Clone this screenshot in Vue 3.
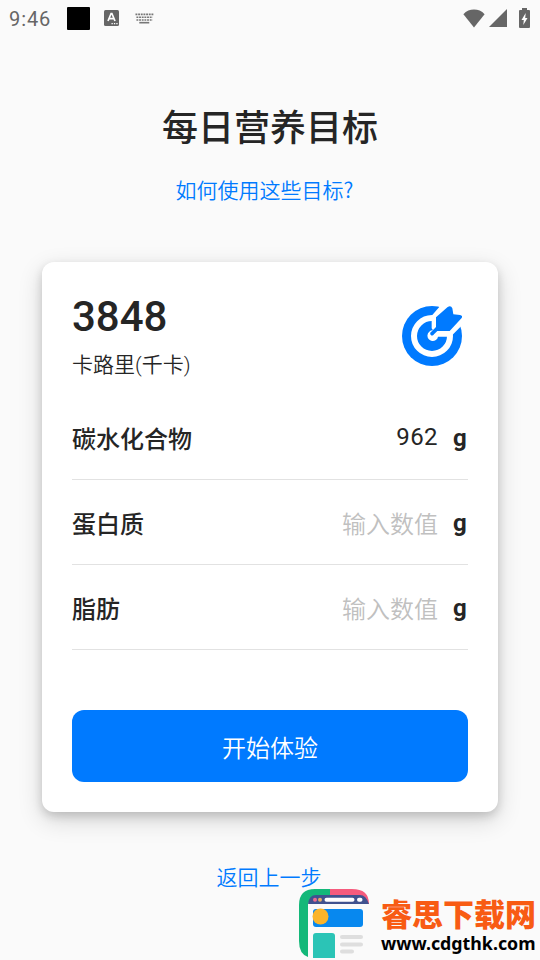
<script setup>
import { ref } from 'vue'

const nutrients = ref([
  { name: '碳水化合物', value: '962' },
  { name: '蛋白质', value: '' },
  { name: '脂肪', value: '' },
])
</script>

<template>
  <div class="screen">
    <header class="status">
      <span class="clock">9:46</span>
      <span class="block"></span>
      <svg class="ime" viewBox="0 0 15 16">
        <rect width="15" height="16" rx="1.5" fill="#666" />
        <path d="M4 11 7.1 3.5h.8L11 11M5.2 8.6h4.6" fill="none" stroke="#fff" stroke-width="1.7" />
        <path d="M7.5 13.7h1.3M9.9 13.7h1.3M12.3 13.7h1.3" stroke="#fff" stroke-width="1.2" />
      </svg>
      <svg class="keys" viewBox="0 0 20 11">
        <g fill="none" stroke="#777" stroke-width="1.7">
          <path d="M.5 1.2h19" stroke-dasharray="2 .8" />
          <path d="M1.5 4.2h17" stroke-dasharray="2 .8" />
          <path d="M1.5 7.1h17" stroke-dasharray="2 .8" />
          <path d="M4.5 9.9h10.5" />
        </g>
      </svg>
      <span class="spacer"></span>
      <svg class="wifi" viewBox="0 0 22 19"><path d="M11 18.500.4 5.200C3.300 2 7 .6 11 .6S18.700 2 21.600 5.200Z" fill="#666" /></svg>
      <svg class="signal" viewBox="0 0 18 18"><path d="M18 0v18H0Z" fill="#666" /></svg>
      <svg class="battery" viewBox="0 0 11 20">
        <path d="M3 0h5v2h2q1 0 1 1v16q0 1-1 1H1q-1 0-1-1V3q0-1 1-1h2Z" fill="#666" />
        <path d="M6.700 5 2.500 12h2.300l-.5 5 4.200-7H6.200Z" fill="#fff" />
      </svg>
    </header>

    <h1>每日营养目标</h1>
    <a class="help">如何使用这些目标?</a>

    <main class="card">
      <section class="summary">
        <div>
          <div class="total">3848</div>
          <div class="unit">卡路里(千卡)</div>
        </div>
        <svg class="target" viewBox="51 48 180 180">
          <circle cx="141" cy="138" r="90" fill="#007aff" />
          <circle cx="141" cy="138" r="54" fill="none" stroke="#fff" stroke-width="18" />
          <path d="M168 45 140 77v38l4 6a16 16 0 1 0 15 19h38l38-38V45Z" fill="#fff" />
          <path d="M153 82 188 51q10-6 14 4l3 18 20 2q9 2 5 9l-36 39h-37l-10 10a6 6 0 1 1-8-8l14-14Z" fill="#007aff" />
        </svg>
      </section>

      <div v-for="item in nutrients" :key="item.name" class="row">
        <span class="name">{{ item.name }}</span>
        <span :class="['value', { empty: !item.value }]">{{ item.value || '输入数值' }}</span>
        <span class="gram">g</span>
      </div>

      <button class="start">开始体验</button>
    </main>

    <a class="back">返回上一步</a>

    <div class="brand">
      <svg class="logo" viewBox="0 0 70 70">
        <path d="M32 0H16Q0 0 0 16v36q0 13 9 16V14L32 6Z" fill="#14b879" />
        <path d="M31 0h22q17 0 17 15L31 7Z" fill="#f55b7d" />
        <path d="M17 6h44q6 0 9 9H9q1-9 8-9Z" fill="#40528f" />
        <path d="M9 15h61v53H9Z" fill="#fafafa" />
        <circle cx="16" cy="10.800" r="2" fill="#ed6b91" />
        <circle cx="21" cy="10.800" r="2" fill="#e3ae65" />
        <path d="M27.500 10.800h26M60 10.800h1.500" stroke="#fff" stroke-width="4" stroke-linecap="round" />
        <rect x="14" y="20" width="50" height="18" rx="3" fill="#0788ef" />
        <circle cx="21.500" cy="27.500" r="8" fill="#fbb42a" />
        <path d="M14 69V47q0-3 3-3h16q3 0 3 3v22Z" fill="#2bc4b6" />
        <path d="M43 48h19M43 55.500h19M43 62.500h10" stroke="#dedede" stroke-width="4" stroke-linecap="round" />
      </svg>
      <div class="brand-text">
        <div class="brand-name">睿思下载网</div>
        <div class="brand-url">www.cdgthk.com</div>
      </div>
    </div>
  </div>
</template>

<style>
body { margin: 0; background: #fafafa; }
</style>

<style scoped>
.screen {
  position: relative;
  box-sizing: border-box;
  width: 540px;
  height: 960px;
  overflow: hidden;
  display: flex;
  flex-direction: column;
  align-items: center;
  background: #fafafa;
  color: #252525;
  font-family: Roboto, "Noto Sans CJK SC", sans-serif;
}
svg { display: block; flex: none; }
.status {
  box-sizing: border-box;
  width: 100%;
  height: 36px;
  padding: 0 10px 0 9px;
  display: flex;
  align-items: center;
  color: #666;
}
.clock { width: 58px; font-size: 20px; letter-spacing: .9px; line-height: 36px; padding-top: 2px; box-sizing: border-box; }
.block { width: 23px; height: 23px; border-radius: 1px; background: #000; }
.ime { width: 15px; height: 16px; margin-left: 14px; }
.keys { width: 19px; height: 11px; margin-left: 16px; }
.spacer { flex: 1; }
.wifi { width: 22px; height: 19px; }
.signal { width: 18px; height: 18px; margin-left: 4px; }
.battery { width: 11px; height: 20px; margin-left: 12px; }
h1 { margin: 66px 0 0; font-size: 36px; line-height: 54px; font-weight: 500; }
.help { margin: 18px 11px 0 0; font-size: 21px; line-height: 30px; font-weight: 350; color: #007aff; font-family: "Noto Sans CJK SC", sans-serif; }
.card {
  box-sizing: border-box;
  width: 456px;
  height: 550px;
  margin-top: 58px;
  padding: 30px;
  border-radius: 12px;
  background: #fff;
  box-shadow: 0 8px 24px rgba(0, 0, 0, .16), 0 4px 10px rgba(0, 0, 0, .15);
}
.summary { display: flex; justify-content: space-between; height: 103px; padding-right: 6px; }
.total { font-size: 42px; line-height: 50px; font-weight: 500; }
.unit { margin-top: 8px; font-size: 21px; line-height: 30px; font-weight: 350; }
.target { width: 60px; height: 60px; margin-top: 14px; }
.row {
  box-sizing: border-box;
  height: 85px;
  display: flex;
  align-items: center;
  border-bottom: 1px solid #e2e2e2;
  font-size: 24px;
  line-height: 36px;
}
.name { flex: 1; font-weight: 500; padding-top: 5px; }
.value { font-weight: 450; letter-spacing: .4px; }
.value.empty { padding-top: 5px; color: #c0c0c0; font-weight: 350; letter-spacing: 0; }
.gram { width: 30px; padding: 2px 0 0 15px; box-sizing: border-box; font-weight: 700; }
.start {
  display: block;
  width: 396px;
  height: 72px;
  margin: 60px 0 0;
  padding: 6px 0 0;
  border: 0;
  border-radius: 12px;
  background: #007aff;
  color: #fff;
  font: 350 24px/66px Roboto, "Noto Sans CJK SC", sans-serif;
}
.back { margin: 51px 2px 0 0; font-size: 21px; line-height: 30px; font-weight: 350; color: #007aff; }
.brand { position: absolute; left: 299px; top: 889px; display: flex; }
.logo { width: 70px; height: 70px; }
.brand-text { padding: 4px 0 0 12px; white-space: nowrap; }
.brand-name { font: 900 31px/40px "Noto Sans CJK SC", sans-serif; color: #f85b13; }
.brand-url { font: 700 17.800px/20px "Noto Sans", sans-serif; color: #000; }
</style>
